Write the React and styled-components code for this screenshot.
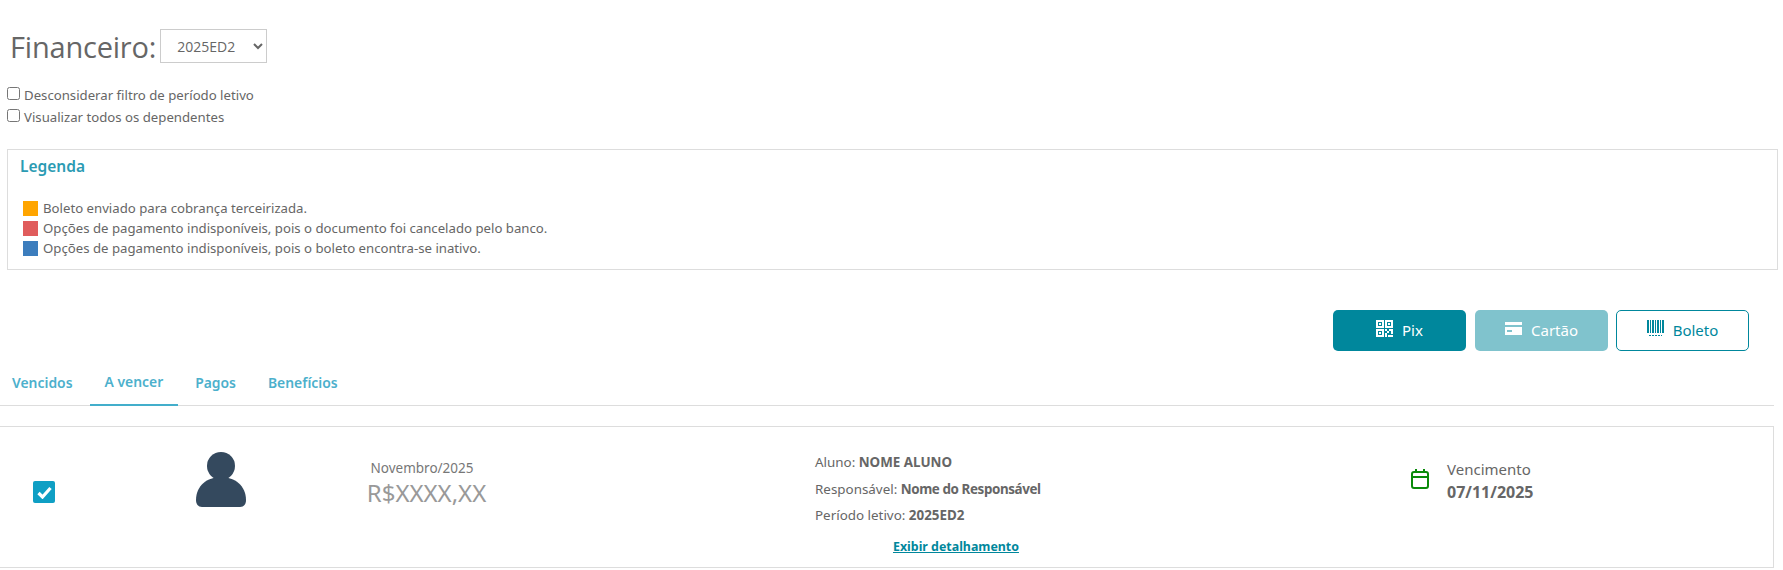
import React from "react";
import styled, { createGlobalStyle } from "styled-components";

const Global = createGlobalStyle`
  html, body { margin: 0; padding: 0; background: #fff; }
  body { font-family: "Noto Sans", "Open Sans", sans-serif; color: #666; width: 1783px; overflow: hidden; }
  * { box-sizing: border-box; }
`;
const Page = styled.div`display: flex; flex-direction: column; width: 1783px; height: 570px;`;
const TitleRow = styled.div`display: flex; align-items: center; gap: 4px; padding: 29px 0 0 10px; height: 63px;`;
const Title = styled.h1`margin: 0; font-size: 29px; font-weight: 400; color: #666; font-family: "Open Sans", sans-serif; letter-spacing: -0.2px;`;
const Select = styled.select`width: 107px; height: 34px; border: 1px solid #ccc; background: #fff; color: #666; font: 14px "Open Sans", sans-serif; padding: 0 12px;`;
const Checks = styled.div`display: flex; flex-direction: column; gap: 2px; padding: 22px 0 0 7px;`;
const CheckRow = styled.label`display: flex; align-items: center; gap: 4px; height: 20px; font-size: 13.2px; color: #666;`;
const Check = styled.input`margin: 0 0 3px; width: 13px; height: 13px;`;
const Legend = styled.section`margin: 22px 5px 0 7px; height: 121px; border: 1px solid #ddd; padding: 5px 12px 0 12px;`;
const LegendTitle = styled.h3`margin: 0; font-size: 15.5px; font-weight: 600; color: #2b9bb3; height: 22px; line-height: 22px;`;
const LegendList = styled.ul`list-style: none; margin: 21px 0 0; padding: 0 0 0 3px;`;
const LegendItem = styled.li`display: flex; align-items: center; gap: 5px; height: 20px; font-size: 13.2px; color: #666;`;
const Swatch = styled.span`width: 15px; height: 15px; background: ${p => p.$c};`;
const Buttons = styled.div`display: flex; justify-content: flex-end; gap: 8px; padding: 40px 34px 0 0;`;
const Button = styled.button`
  width: 133px; height: 41px; border-radius: 5px; display: flex; align-items: center; justify-content: center; gap: 9px;
  font: 15px "Noto Sans", sans-serif; cursor: pointer; padding: 0 0 2px;
  border: 1px solid ${p => p.$v === "outline" ? "#00879c" : "transparent"};
  background: ${p => p.$v === "outline" ? "#fff" : p.$v === "soft" ? "#80c3cd" : "#00879c"};
  color: ${p => p.$v === "outline" ? "#00879c" : "#fff"};
  margin-right: ${p => p.$v ? "0" : "1px"};
  svg { margin-bottom: 3px; }
`;
const Tabs = styled.nav`display: flex; gap: 2px; margin: 16px 9px 0 0; height: 39px; border-bottom: 1px solid #ddd;`;
const Tab = styled.a`
  display: flex; align-items: center; padding: 0 15px 9px ${p => p.$first ? "12px" : "15px"}; height: 39px;
  font-size: 13.9px; font-weight: 600; color: #4cb0cc;
  ${p => p.$active && "border-bottom: 2px solid #43aecb;"}
`;
const Card = styled.article`
  margin: 20px 9px 0 0; height: 142px; border: 1px solid #ddd; border-left: 0;
  display: grid; grid-template-columns: 33px 163px 167px 452px 596px 1fr;
`;
const CheckCell = styled.div`grid-column: 1 / span 2; padding: 54px 0 0 33px;`;
const Checked = styled.span`display: flex; align-items: center; justify-content: center; width: 22px; height: 22px; border-radius: 2px; background: #0f9fc4;`;
const Avatar = styled.div`padding-top: 25px;`;
const Amount = styled.div`display: flex; flex-direction: column; align-items: center; width: 118px; padding-top: 31px;`;
const Month = styled.span`font-size: 13.5px; color: #777; line-height: 20px;`;
const Value = styled.span`font-size: 24px; color: #999; line-height: 32px; margin: -1px 0 0 9px; white-space: nowrap;`;
const Info = styled.div`display: flex; flex-direction: column; padding-top: 22px;`;
const InfoLine = styled.div`font-size: 13.4px; color: #666; height: 26.5px; line-height: 26px;`;
const Strong = styled.b`font-weight: 700; letter-spacing: ${p => p.$tight ? "-0.4px" : "0"};`;
const Details = styled.a`margin: 9px 0 0 78px; font-size: 12.4px; font-weight: 700; color: #00879c; text-decoration: underline;`;
const Due = styled.div`display: flex; align-items: flex-start; gap: 18px; padding-top: 31px; align-self: start; svg { margin-top: 11px; }`;
const DueText = styled.div`display: flex; flex-direction: column; font-size: 15px; color: #666; line-height: 23px; b { font-size: 16px; font-weight: 700; }`;

const Qr = () => (
  <svg width="17" height="17" viewBox="0 0 17 17" fill="#fff"><path d="M0 0h8v8H0zM2 2v4h4V2zM9 0h8v8H9zM11 2v4h4V2zM0 9h8v8H0zM2 11v4h4v-4zM3 3h2v2H3zM12 3h2v2h-2zM3 12h2v2H3zM9 9h2v2H9zM11 11h2v2h-2zM13 9h4v2h-4zM15 11h2v3h-2zM9 13h2v4H9zM12 15h5v2h-5z" fillRule="evenodd"/></svg>
);
const CardIcon = () => (
  <svg width="17" height="13" viewBox="0 0 17 13" fill="#fff"><path d="M0 0h17v3H0zM0 5h17v8H0zM2 8v2h5V8z" fillRule="evenodd"/></svg>
);
const Barcode = () => (
  <svg width="17" height="16" viewBox="0 0 17 16" fill="#00879c"><path d="M0 0h2v13H0zM3 0h1v13H3zM5 0h2v13H5zM8 0h1v13H8zM10 0h2v13h-2zM13 0h1v13h-1zM15 0h2v13h-2zM2 15h2v1H2zM5 15h2v1H5zM8 15h2v1H8zM11 15h2v1h-2zM14 15h1v1h-1z"/></svg>
);

export default function App() {
  return (
    <Page>
      <Global />
      <TitleRow>
        <Title>Financeiro:</Title>
        <Select defaultValue="2025ED2"><option>2025ED2</option></Select>
      </TitleRow>
      <Checks>
        <CheckRow><Check type="checkbox" />Desconsiderar filtro de período letivo</CheckRow>
        <CheckRow><Check type="checkbox" />Visualizar todos os dependentes</CheckRow>
      </Checks>
      <Legend>
        <LegendTitle>Legenda</LegendTitle>
        <LegendList>
          <LegendItem><Swatch $c="#ffa500" />Boleto enviado para cobrança terceirizada.</LegendItem>
          <LegendItem><Swatch $c="#e05c5c" />Opções de pagamento indisponíveis, pois o documento foi cancelado pelo banco.</LegendItem>
          <LegendItem><Swatch $c="#3c7dbd" />Opções de pagamento indisponíveis, pois o boleto encontra-se inativo.</LegendItem>
        </LegendList>
      </Legend>
      <Buttons>
        <Button><Qr />Pix</Button>
        <Button $v="soft"><CardIcon />Cartão</Button>
        <Button $v="outline"><Barcode />Boleto</Button>
      </Buttons>
      <Tabs>
        <Tab $first>Vencidos</Tab>
        <Tab $active>A vencer</Tab>
        <Tab>Pagos</Tab>
        <Tab>Benefícios</Tab>
      </Tabs>
      <Card>
        <CheckCell>
          <Checked><svg width="15" height="13" viewBox="0 0 15 13"><path d="M1.500 7 5.500 11 13.500 2" fill="none" stroke="#fff" strokeWidth="3.200"/></svg></Checked>
        </CheckCell>
        <Avatar>
          <svg width="50" height="55" viewBox="0 0 50 55"><circle cx="25" cy="14" r="14" fill="#34495e"/><path d="M0 48C0 34 11 25 25 25s25 9 25 23c0 4-2 7-6 7H6c-4 0-6-3-6-7z" fill="#34495e"/></svg>
        </Avatar>
        <Amount><Month>Novembro/2025</Month><Value>R$XXXX,XX</Value></Amount>
        <Info>
          <InfoLine>Aluno: <Strong>NOME ALUNO</Strong></InfoLine>
          <InfoLine>Responsável: <Strong $tight>Nome do Responsável</Strong></InfoLine>
          <InfoLine>Período letivo: <Strong>2025ED2</Strong></InfoLine>
          <Details>Exibir detalhamento</Details>
        </Info>
        <Due>
          <svg width="18" height="20" viewBox="0 0 18 20" fill="none" stroke="#0a8a0a" strokeWidth="2"><rect x="1" y="3" width="16" height="16" rx="2"/><path d="M1 8h16M5 0v4M13 0v4"/></svg>
          <DueText><span>Vencimento</span><b>07/11/2025</b></DueText>
        </Due>
      </Card>
    </Page>
  );
}
